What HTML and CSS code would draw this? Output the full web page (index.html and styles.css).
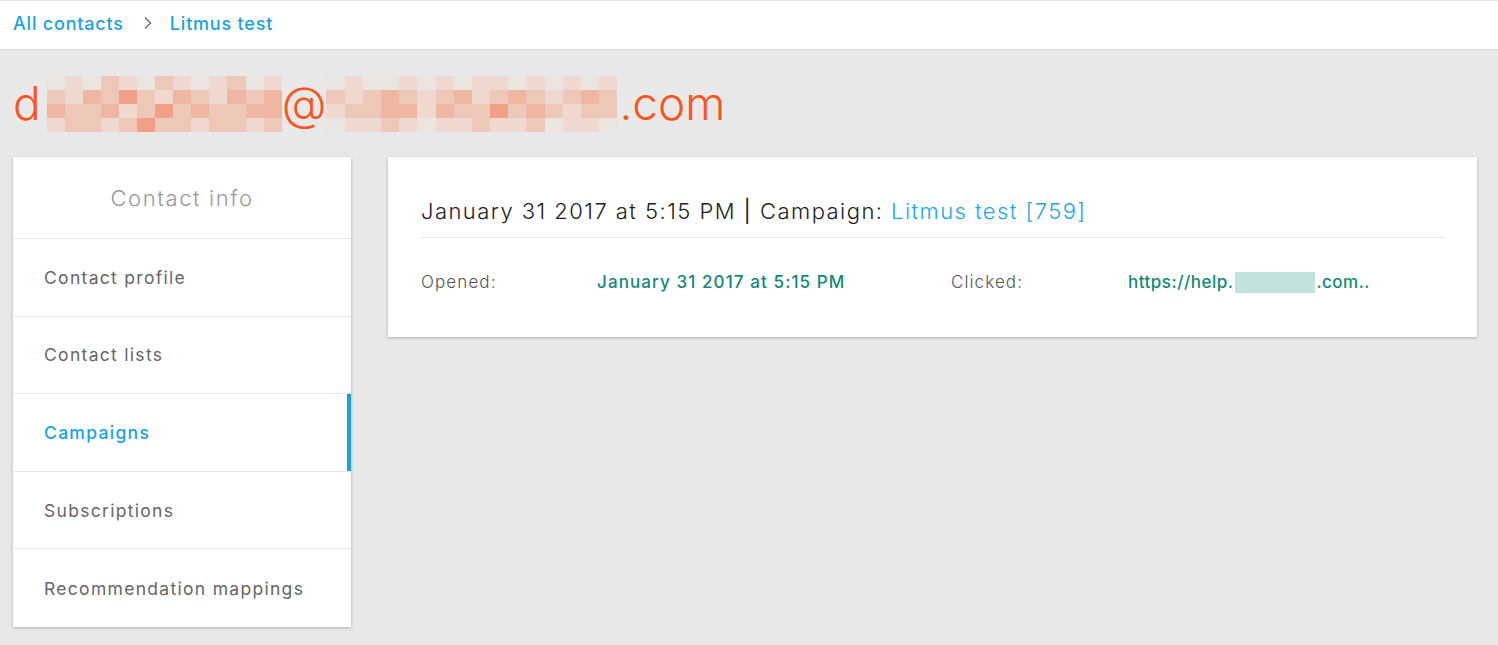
FILE: index.html
```html
<!DOCTYPE html>
<html lang="en">
<head>
<meta charset="utf-8">
<title>Litmus test - Contact</title>
<link rel="stylesheet" href="styles.css">
</head>
<body>
<header class="topbar">
  <nav class="crumbs">
    <a class="crumb" href="#">All contacts</a>
    <svg class="chev" width="10" height="14" viewBox="0 0 10 14"><path d="M2 1.5 L7.5 7 L2 12.5" fill="none" stroke="#777" stroke-width="1.6"/></svg>
    <a class="crumb" href="#">Litmus test</a>
  </nav>
</header>

<h1 class="email">
  <span class="ch">d</span><span class="mask m1"><i class="a"></i><i class="b"></i><i class="a"></i><i class="c"></i><i class="b"></i><i class="a"></i><i class="c"></i><i class="b"></i><i class="a"></i><i class="b"></i><i class="c"></i><i class="a"></i><i class="b"></i>
<i class="c"></i><i class="b"></i><i class="d"></i><i class="c"></i><i class="e"></i><i class="c"></i><i class="b"></i><i class="d"></i><i class="c"></i><i class="b"></i><i class="d"></i><i class="c"></i><i class="d"></i>
<i class="d"></i><i class="c"></i><i class="c"></i><i class="d"></i><i class="b"></i><i class="c"></i><i class="e"></i><i class="c"></i><i class="d"></i><i class="c"></i><i class="c"></i><i class="d"></i><i class="d"></i>
<i class="b"></i><i class="c"></i><i class="c"></i><i class="b"></i><i class="c"></i><i class="e"></i><i class="c"></i><i class="c"></i><i class="b"></i><i class="c"></i><i class="c"></i><i class="b"></i><i class="c"></i></span><span class="ch">@</span><span class="mask m2"><i class="a"></i><i class="b"></i><i class="a"></i><i class="a"></i><i class="b"></i><i class="a"></i><i class="b"></i><i class="a"></i><i class="b"></i><i class="b"></i><i class="a"></i><i class="b"></i><i class="a"></i><i class="b"></i><i class="a"></i><i class="b"></i>
<i class="c"></i><i class="b"></i><i class="c"></i><i class="d"></i><i class="c"></i><i class="b"></i><i class="c"></i><i class="d"></i><i class="b"></i><i class="c"></i><i class="d"></i><i class="c"></i><i class="b"></i><i class="c"></i><i class="d"></i><i class="c"></i>
<i class="b"></i><i class="c"></i><i class="c"></i><i class="d"></i><i class="d"></i><i class="b"></i><i class="d"></i><i class="c"></i><i class="c"></i><i class="e"></i><i class="c"></i><i class="d"></i><i class="c"></i><i class="b"></i><i class="c"></i><i class="c"></i>
<i class="a"></i><i class="b"></i><i class="b"></i><i class="c"></i><i class="b"></i><i class="a"></i><i class="b"></i><i class="b"></i><i class="c"></i><i class="b"></i><i class="b"></i><i class="c"></i><i class="a"></i><i class="b"></i><i class="b"></i><i class="a"></i></span><span class="ch">.com</span>
</h1>

<main class="layout">
  <aside class="side">
    <div class="side-head">Contact info</div>
    <a class="side-item" href="#">Contact profile</a>
    <a class="side-item" href="#">Contact lists</a>
    <a class="side-item active" href="#">Campaigns</a>
    <a class="side-item" href="#">Subscriptions</a>
    <a class="side-item" href="#">Recommendation mappings</a>
  </aside>

  <section class="card">
    <div class="card-title">January 31 2017 at 5:15 PM <span class="pipe">|</span> Campaign: <a class="camp" href="#">Litmus test [759]</a></div>
    <div class="card-row">
      <span class="lbl">Opened:</span>
      <span class="val">January 31 2017 at 5:15 PM</span>
      <span class="lbl">Clicked:</span>
      <span class="val link">https://help.<span class="blur"></span>.com..</span>
    </div>
  </section>
</main>
</body>
</html>
```

FILE: styles.css
```css
* { box-sizing: border-box; }
html, body { margin: 0; padding: 0; }
body {
  background: #e8e8e8;
  font-family: Inter, "Open Sans", sans-serif;
  height: 645px;
  overflow: hidden;
}
a { text-decoration: none; }

.topbar {
  background: #fff;
  height: 50px;
  border-top: 1px solid #e6e6e6;
  border-bottom: 1px solid #d9d9d9;
  display: flex;
  align-items: center;
  padding: 0 0 4px 13px;
}
.crumbs { display: flex; align-items: center; }
.crumb { color: #16a2e8; font-size: 18px; font-weight: 500; letter-spacing: 0.8px; }
.chev { margin: 0 17px 0 19px; }

.email {
  margin: 0;
  height: 107px;
  display: flex;
  align-items: center;
  padding-left: 13px;
  color: #ff5419;
  font-size: 46px;
  font-weight: 300;
  padding-bottom: 1px;
}
.ch { line-height: 1; }
.mask {
  display: grid;
  grid-auto-rows: 14px;
  height: 56px;
  margin-top: 2px;
}
.m1 { width: 235px; grid-template-columns: repeat(13, 1fr); margin-left: 6px; }
.m2 { width: 291px; grid-template-columns: repeat(16, 1fr); margin-right: 2px; }
.mask i { display: block; }
.mask .a { background: #ebe5e2; }
.mask .b { background: #eed8cf; }
.mask .c { background: #edc7b8; }
.mask .d { background: #efb6a2; }
.mask .e { background: #f1a087; }

.layout {
  display: flex;
  align-items: flex-start;
  gap: 37px;
  padding: 0 21px 0 13px;
}
.side {
  width: 338px;
  background: #fff;
  box-shadow: 0 1px 3px rgba(0,0,0,0.25);
  display: flex;
  flex-direction: column;
}
.side-head {
  height: 82px;
  display: flex;
  align-items: center;
  justify-content: center;
  color: #999;
  font-size: 22px;
  font-weight: 300;
  letter-spacing: 1.6px;
  border-bottom: 1px solid #e6e6e6;
}
.side-item {
  height: 77.6px;
  display: flex;
  align-items: center;
  padding-left: 31px;
  font-size: 17.5px;
  color: #666;
  font-weight: 400;
  letter-spacing: 1.3px;
  border-bottom: 1px solid #e6e6e6;
}
.side-item:last-child { border-bottom: none; }
.side-item.active {
  color: #16a2e8;
  font-weight: 500;
  box-shadow: inset -4px 0 0 #16a2e8;
}

.card {
  flex: 1;
  background: #fff;
  box-shadow: 0 1px 3px rgba(0,0,0,0.25);
  padding: 0 33px;
  height: 180px;
}
.card-title {
  height: 81px;
  border-bottom: 1px solid #e6e6e6;
  display: flex;
  align-items: center;
  padding-top: 28px;
  font-size: 22px;
  font-weight: 300;
  letter-spacing: 1.45px;
  color: #222;
  white-space: pre;
}
.pipe { color: #222; font-weight: 400; }
.camp { color: #1aa7ee; }
.card-row {
  display: grid;
  grid-template-columns: 176px 354px 177px 1fr;
  align-items: center;
  height: 88px;
  font-size: 17px;
  letter-spacing: 1.1px;
}
.lbl { color: #555; font-weight: 300; }
.val { color: #0f8a76; font-weight: 500; display: flex; align-items: center; }
.val.link { letter-spacing: 0.5px; }
.blur {
  display: inline-block;
  width: 80px;
  height: 21px;
  background: #c2e2dc;
  margin: 0 1px 0 2px;
}
```
